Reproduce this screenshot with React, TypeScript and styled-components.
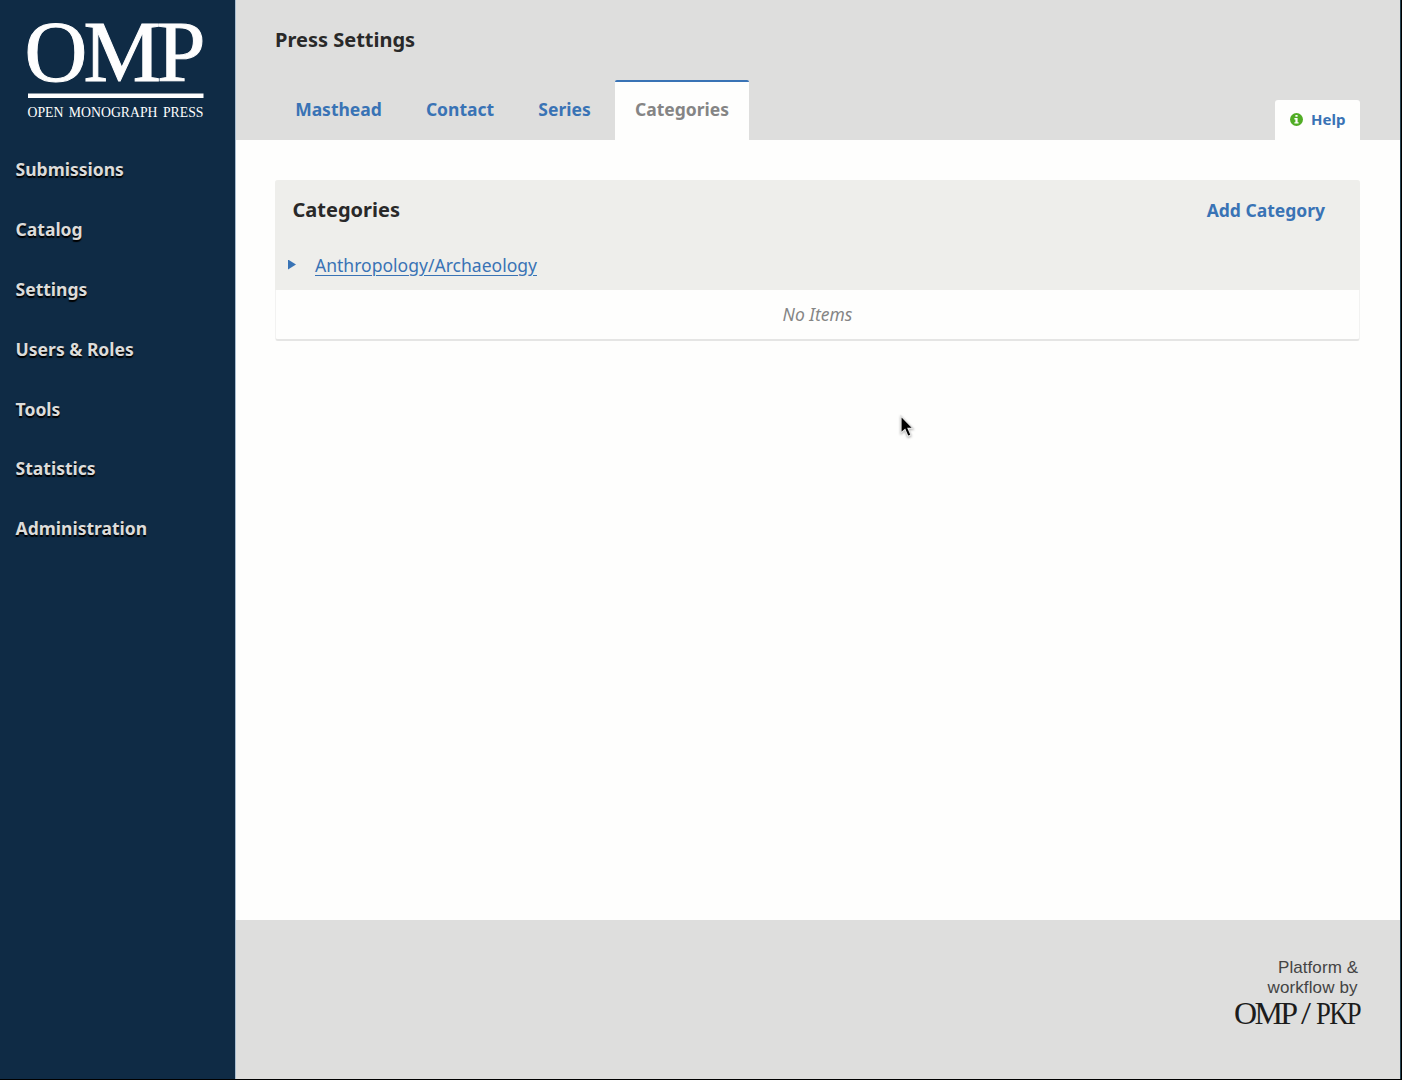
import React from "react";
import styled, { createGlobalStyle } from "styled-components";

const GlobalStyle = createGlobalStyle`
  * { box-sizing: border-box; }
  body { margin: 0; background: #000; }
  #root { font-family: "Noto Sans", sans-serif; }
`;

const Page = styled.div`
  display: flex;
  width: 1401px;
  height: 1079px;
  overflow: hidden;
  border-right: 1px solid #24404f;
  background: #fefefd;
`;

const Sidebar = styled.aside`
  flex: 0 0 235px;
  background: #0f2b45;
`;

const Brand = styled.svg`
  display: block;
  width: 235px;
  height: 140px;
  fill: #fefefe;
  font-family: "Liberation Serif", serif;
`;

const Nav = styled.nav`
  display: flex;
  flex-direction: column;
`;

const NavLink = styled.a`
  height: 59.9px;
  padding-left: 15.6px;
  line-height: 59.4px;
  font-size: 17.5px;
  font-weight: 700;
  color: #dcdcda;
  text-shadow: 0 2px 1px #000;
  white-space: nowrap;
`;

const Main = styled.main`
  flex: 1;
  display: flex;
  flex-direction: column;
  border-left: 1px solid #a9bdd0;
`;

const Header = styled.header`
  height: 140px;
  padding: 0 40px 0 39px;
  display: flex;
  flex-direction: column;
  background: #dededd;
`;

const PageTitle = styled.h1`
  margin: 0;
  height: 80px;
  line-height: 80px;
  font-size: 20px;
  font-weight: 700;
  color: #292929;
`;

const TabBar = styled.div`
  display: flex;
  height: 60px;
`;

const Tab = styled.a<{ $active?: boolean; $width: number }>`
  width: ${(p) => p.$width}px;
  height: 60px;
  margin-left: ${(p) => (p.$active ? 4 : 0)}px;
  text-align: center;
  line-height: ${(p) => (p.$active ? 54 : 58)}px;
  font-size: 17.5px;
  font-weight: 700;
  color: ${(p) => (p.$active ? "#858585" : "#3973b5")};
  background: ${(p) => (p.$active ? "#fefefd" : "transparent")};
  border-top: ${(p) => (p.$active ? "2px solid #3973b5" : "0")};
  border-radius: 2px 2px 0 0;
`;

const HelpTab = styled.a`
  display: flex;
  align-items: center;
  gap: 8px;
  width: 85px;
  height: 40px;
  margin: 20px 0 0 auto;
  padding: 0 0 2px 15px;
  border-radius: 3px 3px 0 0;
  background: #fefefd;
  color: #3973b5;
  font-size: 15px;
  font-weight: 700;
`;

const Content = styled.section`
  flex: 1;
  padding: 40px 40px 0 39px;
`;

const Grid = styled.div`
  height: 161px;
  border: 1px solid #f2f2f1;
  border-top: 0;
  border-bottom: 2px solid #e5e5e4;
  border-radius: 3px;
`;

const GridHead = styled.div`
  display: flex;
  justify-content: space-between;
  align-items: center;
  height: 60px;
  margin: 0 -1px;
  padding: 0 35px 1px 17.5px;
  border-radius: 3px 3px 0 0;
  background: #eeeeeb;
`;

const GridTitle = styled.h2`
  margin: 0;
  font-size: 20px;
  font-weight: 700;
  color: #292929;
`;

const Action = styled.a`
  font-size: 17.5px;
  font-weight: 700;
  color: #3973b5;
`;

const GridRow = styled.div`
  display: flex;
  align-items: center;
  height: 50px;
  margin: 0 -1px;
  padding: 0 0 1px 13px;
  background: #eeeeeb;
`;

const Arrow = styled.span`
  width: 8px;
  height: 10px;
  margin-right: 19px;
  background: #3973b5;
  clip-path: polygon(0 0, 100% 50%, 0 100%);
`;

const CategoryLink = styled.a`
  font-size: 17.55px;
  color: #3973b5;
  text-decoration: underline;
  text-decoration-thickness: 1px;
  text-underline-offset: 3px;
`;

const Empty = styled.div`
  height: 49px;
  line-height: 49px;
  text-align: center;
  font-size: 17.5px;
  font-style: italic;
  color: #858585;
`;

const Footer = styled.footer`
  display: flex;
  justify-content: flex-end;
  height: 159px;
  padding-top: 30px;
  background: #dededd;
`;

const Pointer = styled.svg`
  position: absolute;
  left: 896px;
  top: 413px;
  width: 22px;
  height: 28px;
  filter: drop-shadow(0 1px 1px rgba(0, 0, 0, 0.3));
`;

const navItems = [
  "Submissions",
  "Catalog",
  "Settings",
  "Users & Roles",
  "Tools",
  "Statistics",
  "Administration",
];

const tabs = [
  { label: "Masthead", width: 127 },
  { label: "Contact", width: 116 },
  { label: "Series", width: 93 },
  { label: "Categories", width: 134, active: true },
];

export default function App() {
  return (
    <>
      <GlobalStyle />
      <Page>
        <Sidebar>
          <Brand viewBox="0 0 235 140">
            <text
              x="24.5"
              y="81"
              fontSize="87"
              textLength="181"
              lengthAdjust="spacing"
              stroke="#fefefe"
              strokeWidth="1"
            >
              OMP
            </text>
            <rect x="28" y="93.5" width="175.5" height="4.5" />
            <text
              x="27.5"
              y="117.3"
              fontSize="13.8"
              textLength="176"
              lengthAdjust="spacingAndGlyphs"
              wordSpacing="2"
            >
              OPEN MONOGRAPH PRESS
            </text>
          </Brand>
          <Nav>
            {navItems.map((label) => (
              <NavLink key={label}>{label}</NavLink>
            ))}
          </Nav>
        </Sidebar>
        <Main>
          <Header>
            <PageTitle>Press Settings</PageTitle>
            <TabBar>
              {tabs.map((tab) => (
                <Tab key={tab.label} $width={tab.width} $active={tab.active}>{tab.label}</Tab>
              ))}
              <HelpTab>
                <svg width="13" height="13" viewBox="0 0 13 13">
                  <circle cx="6.5" cy="6.5" r="6.5" fill="#51ad25" />
                  <path d="M5.4 2h2.2v1.8H5.4zM4.4 5h3.2v4.2h1v1.4H4.4V9.2h1V6.4h-1z" fill="#fefefd" />
                </svg>
                Help
              </HelpTab>
            </TabBar>
          </Header>
          <Content>
            <Grid>
              <GridHead>
                <GridTitle>Categories</GridTitle>
                <Action>Add Category</Action>
              </GridHead>
              <GridRow>
                <Arrow />
                <CategoryLink>Anthropology/Archaeology</CategoryLink>
              </GridRow>
              <Empty>No Items</Empty>
            </Grid>
          </Content>
          <Footer>
            <svg width="200" height="90" viewBox="1200 950 200 90" fill="#1c1c1c">
              <g fontFamily="Liberation Sans, sans-serif" fontSize="17" fill="#444">
                <text x="1278" y="973" textLength="80">Platform &amp;</text>
                <text x="1267.5" y="993" textLength="90">workflow by</text>
              </g>
              <g fontFamily="Liberation Serif, serif" fontSize="32">
                <text x="1234" y="1024" textLength="64" lengthAdjust="spacing">OMP</text>
                <text x="1301" y="1024" textLength="10" lengthAdjust="spacingAndGlyphs">/</text>
                <text x="1316" y="1024" textLength="44" lengthAdjust="spacingAndGlyphs" letterSpacing="-2">PKP</text>
              </g>
            </svg>
          </Footer>
        </Main>
      </Page>
      <Pointer viewBox="0 0 22 28">
        <path d="M5 3v17l4-3.6 3 7 3-1.3-3-6.8h5z" fill="#000" stroke="#e4e4e4" strokeWidth="1.2" />
      </Pointer>
    </>
  );
}
